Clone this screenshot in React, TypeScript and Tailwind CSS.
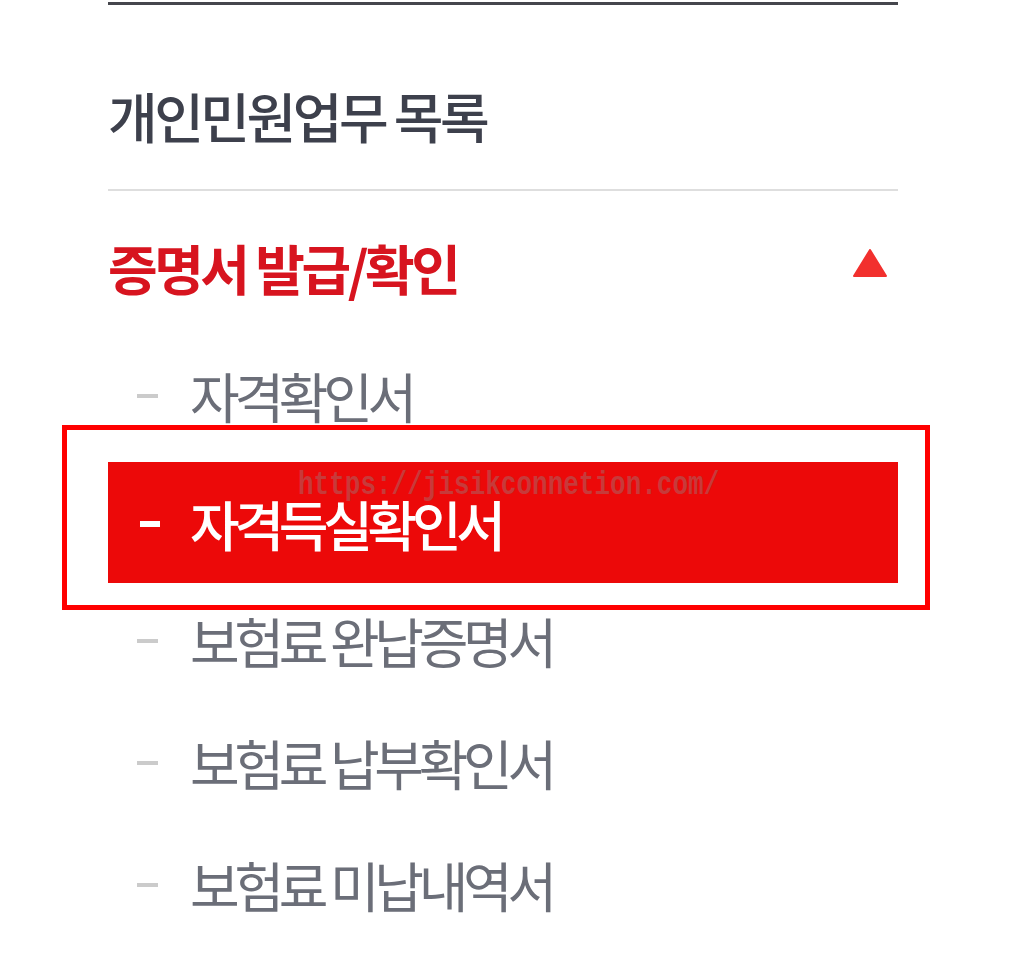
const font = "font-['Noto_Sans_CJK_KR','Noto_Sans',sans-serif]";

const subItems = ["보험료 완납증명서", "보험료 납부확인서", "보험료 미납내역서"];

function SubRow({ label }: { label: string }) {
  return (
    <div className="h-[122px] flex items-center pb-[7px] pl-[29px]">
      <span className="w-[21px] h-[4px] bg-[#cbcbcb]" />
      <span className="ml-[32px] text-[54px] leading-none tracking-[-5.3px] text-[#6b6e78]">
        {label}
      </span>
    </div>
  );
}

export default function App() {
  return (
    <div className={`w-[1024px] h-[967px] bg-white overflow-hidden ${font}`}>
      <div className="ml-[108px] w-[790px]">
        {/* top border */}
        <div className="mt-[2px] h-[3px] bg-[#45464d]" />

        {/* section title */}
        <div className="h-[184px] flex items-center pt-[38px]">
          <span className="text-[54px] leading-none tracking-[-3.5px] text-[#3d404c] font-medium">
            개인민원업무 목록
          </span>
        </div>
        <div className="h-[2px] bg-[#dedede]" />

        {/* open group */}
        <div className="h-[144px] flex items-center justify-between pt-[10px]">
          <span className="text-[54px] leading-none tracking-[-3.5px] text-[#d7141f] font-bold">
            증명서 발급/확인
          </span>
          <svg width="34" height="28" viewBox="0 0 34 28" className="mr-[11px] mb-[10px]">
            <path d="M17 1 L33 27 L1 27 Z" fill="#f2302e" stroke="#f2302e" strokeWidth="2" strokeLinejoin="round" />
          </svg>
        </div>

        {/* sub menu */}
        <div className="h-[122px] flex items-center pl-[29px]">
          <span className="w-[21px] h-[4px] bg-[#cbcbcb]" />
          <span className="ml-[32px] text-[54px] leading-none tracking-[-5.3px] text-[#6b6e78]">
            자격확인서
          </span>
        </div>

        <div className="relative mt-[5px] h-[121px] bg-[#ec0909] flex items-center pl-[32px] pt-[2px]">
          <span className="w-[20px] h-[6px] bg-white" />
          <span className="ml-[30px] text-[54px] leading-none tracking-[-5.3px] text-white font-medium">
            자격득실확인서
          </span>
          <span className="absolute left-[190px] top-[6px] font-['Liberation_Mono',monospace] font-bold text-[26px] leading-none text-[#c73a3a] scale-y-[1.3] origin-top">
            https://jisikconnetion.com/
          </span>
          {/* highlight outline */}
          <span className="absolute -top-[37px] -bottom-[27px] -left-[46px] -right-[32px] border-[5px] border-[#ff0000]" />
        </div>

        {subItems.map((s) => (
          <SubRow key={s} label={s} />
        ))}
      </div>
    </div>
  );
}
